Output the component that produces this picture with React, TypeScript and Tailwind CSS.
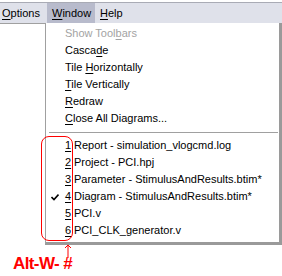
import React from 'react';

const U = ({ children }: { children: React.ReactNode }) => (
  <span className="underline underline-offset-[2px]">{children}</span>
);

const commands: { pre: string; key: string; post: string; disabled?: boolean }[] = [
  { pre: 'Show Tool', key: 'b', post: 'ars', disabled: true },
  { pre: 'Casca', key: 'd', post: 'e' },
  { pre: 'Tile ', key: 'H', post: 'orizontally' },
  { pre: '', key: 'T', post: 'ile Vertically' },
  { pre: '', key: 'R', post: 'edraw' },
  { pre: '', key: 'C', post: 'lose All Diagrams...' },
];

const recent = [
  'Report - simulation_vlogcmd.log',
  'Project - PCI.hpj',
  'Parameter - StimulusAndResults.btim*',
  'Diagram - StimulusAndResults.btim*',
  'PCI.v',
  'PCI_CLK_generator.v',
];

export default function App() {
  return (
    <div
      className="relative w-[282px] h-[276px] bg-white text-[11px] text-black overflow-hidden"
      style={{ fontFamily: '"Liberation Sans", Arial, sans-serif' }}
    >
      {/* menu bar */}
      <div className="mt-[2px] h-[22px] flex items-stretch bg-[#dfe1ea] border-t border-[#a9abb5] border-b border-b-[#a0a0a0]">
        <div className="pl-[2px] w-[45px] flex items-center">
          <span>
            <U>O</U>ptions
          </span>
        </div>
        <div className="ml-[2px] w-[48px] flex items-center pl-[5px] bg-[#b8bbcc]">
          <span>
            <U>W</U>indow
          </span>
        </div>
        <div className="ml-[5px] flex items-center">
          <span>
            <U>H</U>elp
          </span>
        </div>
      </div>

      {/* dropdown */}
      <div className="absolute left-[45px] top-[23px] w-[237px] h-[222px] bg-white border-l border-[#a0a0a0] border-r-[3px] border-r-[#9a9a9a] border-b-[3px] border-b-[#9a9a9a]">
        <div className="pt-[2px]">
          {commands.map((c) => (
            <div
              key={c.pre + c.key}
              className={`h-[17px] flex items-center pl-[19px] ${c.disabled ? 'text-[#a3a3a3]' : ''}`}
            >
              <span className="whitespace-pre">
                {c.pre}
                <U>{c.key}</U>
                {c.post}
              </span>
            </div>
          ))}
          <div className="h-[10px] flex items-center pl-[3px] pr-[1px]">
            <div className="h-px w-full bg-[#a0a0a0]" />
          </div>
          {recent.map((r, i) => (
            <div key={r} className="h-[17px] flex items-center">
              <div className="w-[18px] flex justify-center">
                {i === 3 && (
                  <svg width="8" height="8" viewBox="0 0 8 8">
                    <path d="M0.5 4 L3 6.5 L7.5 1.5" stroke="#000" strokeWidth="1.6" fill="none" />
                  </svg>
                )}
              </div>
              <div className="w-[9px] pl-[1px]">
                <U>{i + 1}</U>
              </div>
              <span className="ml-[1px]">{r}</span>
            </div>
          ))}
        </div>
      </div>

      {/* annotation */}
      <div className="absolute left-[41px] top-[136px] w-[32px] h-[105px] border border-[#ff0000] rounded-[8px]" />
      <svg className="absolute left-[63px] top-[244px]" width="10" height="14" viewBox="0 0 10 14">
        <path d="M5 1 L5 14" stroke="#ff0000" strokeWidth="1" />
        <path d="M2 4 L5 1 L8 4" stroke="#ff0000" strokeWidth="1" fill="none" />
      </svg>
      <div className="absolute left-[13px] top-[254px] text-[17px] font-bold text-[#ff0000] leading-[19px] tracking-[-0.6px]">
        Alt-W- #
      </div>
    </div>
  );
}
